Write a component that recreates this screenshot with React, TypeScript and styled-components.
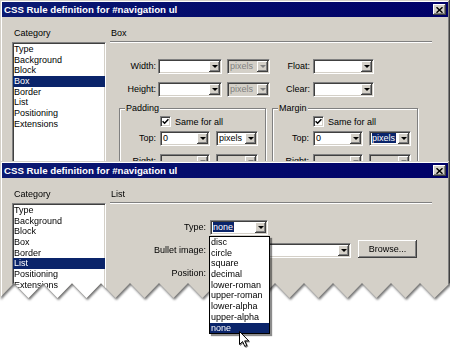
import React from 'react';
import styled, { createGlobalStyle } from 'styled-components';

const FACE = '#d4d0c8';
const SHADOW = '#808080';
const DARK = '#404040';
const NAVY = '#0a246a';

const GlobalStyle = createGlobalStyle`
  html, body {
    margin: 0;
    padding: 0;
    background: #fff;
  }
  body {
    font-family: "Liberation Sans", Arial, sans-serif;
    font-size: 9px;
    color: #000;
  }
  * {
    box-sizing: border-box;
  }
`;

const Stage = styled.div`
  position: relative;
  width: 450px;
  height: 357px;
  overflow: hidden;
  background: #fff;
`;

const Window = styled.div<{ $height: number }>`
  width: 450px;
  height: ${(p) => p.$height}px;
  padding: 2px;
  background: ${FACE};
  box-shadow: inset -1px -1px 0 ${DARK}, inset 1px 1px 0 ${FACE},
    inset -2px -2px 0 ${SHADOW}, inset 2px 2px 0 #fff;
  overflow: hidden;
`;

const BackWindow = styled(Window)`
  position: absolute;
  left: 0;
  top: 0;
`;

const TornWrap = styled.div`
  position: absolute;
  left: 0;
  top: 161px;
  filter: drop-shadow(1px 2px 1px rgba(0, 0, 0, 0.55));
`;

const TornWindow = styled(Window)<{ $clip: string }>`
  clip-path: polygon(${(p) => p.$clip});
`;

const TitleBar = styled.div`
  height: 15px;
  padding: 0 2px;
  display: flex;
  align-items: center;
  justify-content: space-between;
  background: linear-gradient(90deg, #0c1a72 0%, #040c6c 45%, #000068 100%);
  color: #fff;
  font-weight: bold;
  font-size: 9.7px;
  white-space: nowrap;
`;

const CloseButton = styled.span`
  width: 13px;
  height: 11px;
  display: flex;
  align-items: center;
  justify-content: center;
  background: ${FACE};
  box-shadow: inset -1px -1px 0 ${DARK}, inset 1px 1px 0 #fff,
    inset -2px -2px 0 ${SHADOW};
`;

const Body = styled.div`
  display: flex;
  padding: 10px 0 0 10px;
`;

const CategoryCol = styled.div`
  width: 94px;
  flex: none;
`;

const Caption = styled.div`
  height: 12px;
  line-height: 12px;
  padding-left: 2px;
`;

const ListBox = styled.div<{ $height: number }>`
  margin-top: 3px;
  height: ${(p) => p.$height}px;
  background: #fff;
  border: 1px solid;
  border-color: ${SHADOW} #fff #fff ${SHADOW};
  box-shadow: inset 1px 1px 0 ${DARK}, inset -1px -1px 0 ${FACE};
  padding-top: 1px;
`;

const ListItem = styled.div<{ $selected?: boolean }>`
  height: 10.7px;
  line-height: 10.7px;
  padding-left: 1px;
  white-space: nowrap;
  background: ${(p) => (p.$selected ? NAVY : 'transparent')};
  color: ${(p) => (p.$selected ? '#fff' : '#000')};
`;

const Panel = styled.div`
  width: 322px;
  margin-left: 4px;
`;

const PanelTitle = styled(Caption)`
  padding-left: 1px;
`;

const Separator = styled.div`
  margin-top: 2px;
  height: 2px;
  border-top: 1px solid ${SHADOW};
  border-bottom: 1px solid #fff;
`;

const FieldRow = styled.div<{ $top: number; $end?: boolean }>`
  display: flex;
  align-items: ${(p) => (p.$end ? 'flex-end' : 'center')};
  margin-top: ${(p) => p.$top}px;
`;

const FieldLabel = styled.span<{ $w: number; $gap?: number }>`
  flex: none;
  width: ${(p) => p.$w}px;
  margin-right: ${(p) => p.$gap ?? 2}px;
  line-height: 15px;
  text-align: right;
  white-space: nowrap;
`;

const ComboFrame = styled.div<{ $w: number; $ml?: number; $disabled?: boolean }>`
  flex: none;
  width: ${(p) => p.$w}px;
  height: 15px;
  margin-left: ${(p) => p.$ml ?? 0}px;
  padding: 1px;
  display: flex;
  background: ${(p) => (p.$disabled ? FACE : '#fff')};
  border: 1px solid;
  border-color: ${SHADOW} #fff #fff ${SHADOW};
  box-shadow: inset 1px 1px 0 ${DARK}, inset -1px -1px 0 ${FACE};
`;

const ComboValue = styled.span<{ $disabled?: boolean }>`
  flex: 1;
  overflow: hidden;
  padding-left: 1px;
  line-height: 11px;
  white-space: nowrap;
  color: ${(p) => (p.$disabled ? SHADOW : '#000')};
`;

const Highlight = styled.span`
  background: ${NAVY};
  color: #fff;
  padding: 0 1px 0 0;
`;

const DropBtn = styled.span<{ $disabled?: boolean }>`
  flex: none;
  width: 11px;
  background: ${FACE};
  box-shadow: inset -1px -1px 0 ${DARK}, inset 1px 1px 0 #fff,
    inset -2px -2px 0 ${SHADOW};
  display: flex;
  align-items: center;
  justify-content: center;
  padding-bottom: 1px;

  &::after {
    content: '';
    border-left: 3px solid transparent;
    border-right: 3px solid transparent;
    border-top: 3px solid ${(p) => (p.$disabled ? SHADOW : '#000')};
  }
`;

const GroupRow = styled.div`
  display: flex;
  gap: 6px;
  margin-top: 11px;
  margin-left: 9px;
`;

const GroupBox = styled.div<{ $w: number }>`
  width: ${(p) => p.$w}px;
  height: 70px;
  border: 1px solid ${SHADOW};
  box-shadow: inset 1px 1px 0 #fff, 1px 1px 0 #fff;
`;

const Legend = styled.div`
  width: fit-content;
  margin: -7px 0 0 5px;
  padding: 0 1px;
  line-height: 12px;
  background: ${FACE};
`;

const CheckRow = styled.div`
  display: flex;
  align-items: center;
  height: 11px;
  margin-top: 2px;
  padding-left: 40px;
`;

const CheckBox = styled.span`
  width: 11px;
  height: 11px;
  display: flex;
  align-items: center;
  justify-content: center;
  background: #fff;
  border: 1px solid;
  border-color: ${SHADOW} #fff #fff ${SHADOW};
  box-shadow: inset 1px 1px 0 ${DARK}, inset -1px -1px 0 ${FACE};
`;

const CheckText = styled.span`
  margin-left: 4px;
  white-space: nowrap;
`;

const PushButton = styled.div<{ $w: number; $ml?: number }>`
  flex: none;
  width: ${(p) => p.$w}px;
  height: 18px;
  margin-left: ${(p) => p.$ml ?? 0}px;
  display: flex;
  align-items: center;
  justify-content: center;
  background: ${FACE};
  box-shadow: inset -1px -1px 0 ${DARK}, inset 1px 1px 0 #fff,
    inset -2px -2px 0 ${SHADOW};
`;

const DropList = styled.div`
  position: absolute;
  left: 209px;
  top: 236px;
  width: 61px;
  background: #fff;
  border: 1px solid #000;
  box-shadow: 2px 2px 1px rgba(0, 0, 0, 0.45);
`;

const Cursor = styled.svg`
  position: absolute;
  left: 239px;
  top: 331px;
  filter: drop-shadow(1px 1px 0.6px rgba(0, 0, 0, 0.45));
`;

const categories = ['Type', 'Background', 'Block', 'Box', 'Border', 'List', 'Positioning', 'Extensions'];
const listTypes = ['disc', 'circle', 'square', 'decimal', 'lower-roman', 'upper-roman', 'lower-alpha', 'upper-alpha', 'none'];

const tornEdge = (() => {
  const pts = ['0px 0px', '450px 0px', '450px 122px'];
  for (let k = 15; k >= 0; k--) {
    const peak = 14 + 29 * k;
    if (k < 15) pts.push(`${peak}px 122px`);
    pts.push(`${peak - 14.5}px 137px`);
  }
  return pts.join(', ');
})();

interface ComboProps {
  w: number;
  ml?: number;
  value?: string;
  disabled?: boolean;
  selected?: boolean;
}

const Combo = ({ w, ml, value = '', disabled, selected }: ComboProps) => (
  <ComboFrame $w={w} $ml={ml} $disabled={disabled}>
    <ComboValue $disabled={disabled}>{selected ? <Highlight>{value}</Highlight> : value}</ComboValue>
    <DropBtn $disabled={disabled} />
  </ComboFrame>
);

const Title = () => (
  <TitleBar>
    <span>CSS Rule definition for #navigation ul</span>
    <CloseButton>
      <svg width="7" height="6" viewBox="0 0 7 6">
        <path d="M0.5 0.3 L6.5 5.7 M6.5 0.3 L0.5 5.7" stroke="#000" strokeWidth="1.5" />
      </svg>
    </CloseButton>
  </TitleBar>
);

const Categories = ({ selected, height }: { selected: string; height: number }) => (
  <CategoryCol>
    <Caption>Category</Caption>
    <ListBox $height={height}>
      {categories.map((c) => (
        <ListItem key={c} $selected={c === selected}>
          {c}
        </ListItem>
      ))}
    </ListBox>
  </CategoryCol>
);

const SameForAll = () => (
  <CheckRow>
    <CheckBox>
      <svg width="7" height="7" viewBox="0 0 7 7">
        <path d="M0.6 3.2 L2.6 5.2 L6.4 1.2" fill="none" stroke="#000" strokeWidth="1.5" />
      </svg>
    </CheckBox>
    <CheckText>Same for all</CheckText>
  </CheckRow>
);

const SpacingGroup = ({ title, w, unitSelected }: { title: string; w: number; unitSelected?: boolean }) => (
  <GroupBox $w={w}>
    <Legend>{title}</Legend>
    <SameForAll />
    <FieldRow $top={4}>
      <FieldLabel $w={36} $gap={4}>Top:</FieldLabel>
      <Combo w={50} value="0" />
      <Combo w={42} ml={6} value="pixels" selected={unitSelected} />
    </FieldRow>
    <FieldRow $top={8}>
      <FieldLabel $w={36} $gap={4}>Right:</FieldLabel>
      <Combo w={50} disabled />
      <Combo w={42} ml={6} disabled />
    </FieldRow>
  </GroupBox>
);

export default function App() {
  return (
    <>
      <GlobalStyle />
      <Stage>
        <BackWindow $height={178}>
          <Title />
          <Body>
            <Categories selected="Box" height={130} />
            <Panel>
              <PanelTitle>Box</PanelTitle>
              <Separator />
              <FieldRow $top={16}>
                <FieldLabel $w={46}>Width:</FieldLabel>
                <Combo w={64} />
                <Combo w={43} ml={5} value="pixels" disabled />
                <FieldLabel $w={40} $gap={3}>Float:</FieldLabel>
                <Combo w={61} />
              </FieldRow>
              <FieldRow $top={8}>
                <FieldLabel $w={46}>Height:</FieldLabel>
                <Combo w={64} />
                <Combo w={43} ml={5} value="pixels" disabled />
                <FieldLabel $w={40} $gap={3}>Clear:</FieldLabel>
                <Combo w={61} />
              </FieldRow>
              <GroupRow>
                <SpacingGroup title="Padding" w={147} />
                <SpacingGroup title="Margin" w={146} unitSelected />
              </GroupRow>
            </Panel>
          </Body>
        </BackWindow>

        <TornWrap>
          <TornWindow $height={140} $clip={tornEdge}>
            <Title />
            <Body>
              <Categories selected="List" height={110} />
              <Panel>
                <PanelTitle>List</PanelTitle>
                <Separator />
                <FieldRow $top={16}>
                  <FieldLabel $w={96} $gap={4}>Type:</FieldLabel>
                  <Combo w={58} value="none" selected />
                </FieldRow>
                <FieldRow $top={5} $end>
                  <FieldLabel $w={96} $gap={4}>Bullet image:</FieldLabel>
                  <Combo w={141} />
                  <PushButton $w={59} $ml={7}>Browse...</PushButton>
                </FieldRow>
                <FieldRow $top={8}>
                  <FieldLabel $w={96} $gap={4}>Position:</FieldLabel>
                  <Combo w={58} />
                </FieldRow>
              </Panel>
            </Body>
          </TornWindow>
        </TornWrap>

        <DropList>
          {listTypes.map((t) => (
            <ListItem key={t} $selected={t === 'none'}>
              {t}
            </ListItem>
          ))}
        </DropList>

        <Cursor width="12" height="18" viewBox="0 0 12 18">
          <path
            d="M0.5 0.5 L0.5 13.5 L3.6 10.6 L5.8 15.4 L7.8 14.5 L5.7 9.9 L9.8 9.9 Z"
            fill="#fff"
            stroke="#000"
            strokeWidth="1"
            strokeLinejoin="miter"
          />
        </Cursor>
      </Stage>
    </>
  );
}
